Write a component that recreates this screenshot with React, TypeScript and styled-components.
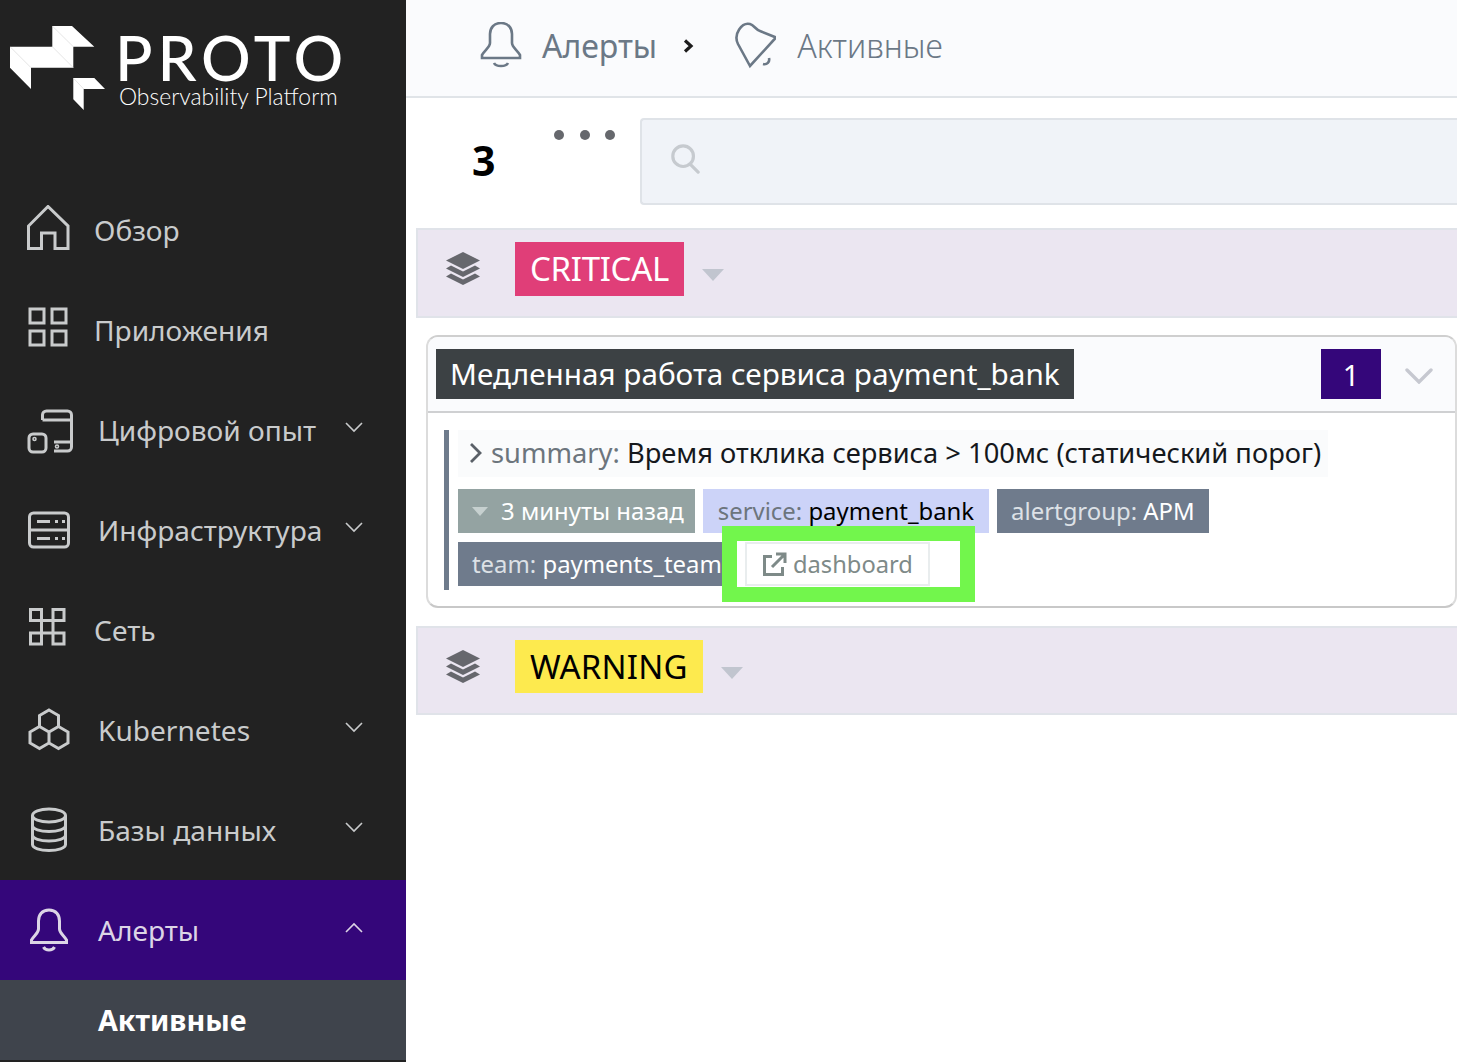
import React from "react";
import styled, { createGlobalStyle } from "styled-components";

const Global = createGlobalStyle`
  html, body { margin: 0; padding: 0; background: #fff; }
  body { font-family: "Noto Sans", "Open Sans", sans-serif; overflow: hidden; }
  #root { width: 1457px; height: 1062px; }
  * { box-sizing: border-box; }
`;

const Page = styled.div`
  display: flex; width: 1457px; height: 1062px; overflow: hidden; background: #fff;
`;
const Sidebar = styled.aside`
  width: 406px; flex: none; background: #222222; display: flex; flex-direction: column;
`;
const LogoArea = styled.div`
  height: 180px; display: flex; align-items: flex-start; padding: 26px 0 0 10px; color: #fff;
`;
const LogoMark = styled.svg`
  width: 95px; height: 84px; flex: none; fill: #fff;
`;
const LogoFold = styled.path`
  fill: none; stroke: #d4d4d4; stroke-width: 0.6;
`;
const LogoText = styled.div`
  margin-left: 10px; display: flex; flex-direction: column;
`;
const LogoTitle = styled.div`
  font-family: Lato, sans-serif; font-size: 62px; line-height: 46px; letter-spacing: 4.9px; font-weight: 500; margin-top: 8px; white-space: nowrap;
`;
const LogoSub = styled.div`
  font-family: Lato, sans-serif; font-weight: 300; font-size: 22.9px; line-height: 24px; margin: 4px 0 0 4px; white-space: nowrap;
`;
const NavItem = styled.div<{ $active?: boolean }>`
  height: 100px; display: flex; align-items: center; padding-left: 27px; padding-right: 43px;
  background: ${(p) => (p.$active ? "#34067a" : "transparent")};
  color: ${(p) => (p.$active ? "#dcd5e6" : "#c9cbcc")};
`;
const NavIcon = styled.svg<{ $wide?: boolean }>`
  width: ${(p) => (p.$wide ? 71 : 67)}px; height: 50px; flex: none;
  fill: none; stroke: currentColor; stroke-width: 3;
`;
const NavLabel = styled.span`
  font-size: 28.1px; line-height: 36px; flex: 1;
`;
const NavChevron = styled.svg`
  width: 18px; height: 11px; flex: none; fill: none; stroke: currentColor; stroke-width: 1.6; margin-top: -5px;
`;
const SubItem = styled.div`
  height: 80px; background: #3f444c; color: #fff; font-weight: 700; font-size: 28.7px; display: flex; align-items: center; padding: 0 0 2px 98px;
`;
const Main = styled.main`
  flex: 1; min-width: 0; display: flex; flex-direction: column;
`;
const Header = styled.header`
  height: 98px; background: #fafbfd; border-bottom: 2px solid #e0e4e8; display: flex; align-items: center;
  padding: 0 0 4px 74px; color: #6b7886;
`;
const CrumbIcon = styled.svg`
  width: 42px; height: 48px; flex: none; fill: none; stroke: currentColor; stroke-width: 2.6;
`;
const CrumbText = styled.span<{ $light?: boolean }>`
  font-size: ${(p) => (p.$light ? 32.1 : 32)}px; margin-left: ${(p) => (p.$light ? 21 : 20)}px; line-height: 40px;
  font-weight: ${(p) => (p.$light ? 300 : 400)};
`;
const CrumbSep = styled.svg`
  width: 11px; height: 14px; flex: none; margin: 0 40px 0 26px; fill: none; stroke: #1c1c1c; stroke-width: 3.2;
`;
const Toolbar = styled.div`
  display: flex; align-items: flex-start; padding: 20px 0 0 66px; height: 130px; flex: none;
`;
const Count = styled.div`
  width: 82px; font-size: 41px; font-weight: 700; color: #000; line-height: 48px; margin-top: 18px;
`;
const Dots = styled.div`
  display: flex; gap: 15.5px; margin-top: 12px; width: 86px; flex: none;
`;
const Dot = styled.span`
  width: 10px; height: 10px; border-radius: 50%; background: #66686d;
`;
const Search = styled.div`
  flex: 1; height: 87px; background: #f0f3f8; border: 2px solid #dfe3e8; border-right: none; border-radius: 4px 0 0 4px;
  display: flex; align-items: center; padding: 0 0 6px 28px;
`;
const SearchIcon = styled.svg`
  width: 30px; height: 30px; fill: none; stroke: #c6cacf; stroke-width: 3.4; stroke-linecap: round;
`;
const Group = styled.section<{ $warn?: boolean }>`
  margin-left: 10px; height: ${(p) => (p.$warn ? 89 : 90)}px; background: #ebe6f1; border: 2px solid #e0e3e9; border-right: none;
  display: flex; align-items: center; padding: 0 0 8px 27px;
`;
const LayersIcon = styled.svg`
  width: 36px; height: 36px; flex: none; fill: #66676d;
`;
const Severity = styled.div<{ $warn?: boolean }>`
  margin-left: 34px; height: ${(p) => (p.$warn ? 53 : 54)}px; padding: 0 15px ${(p) => (p.$warn ? 0 : 2)}px; display: flex; align-items: center;
  background: ${(p) => (p.$warn ? "#fdea4e" : "#e03e78")}; color: ${(p) => (p.$warn ? "#000" : "#fff")};
  font-size: 33px; letter-spacing: ${(p) => (p.$warn ? 0.2 : -0.3)}px;
`;
const Caret = styled.svg`
  width: 22px; height: 14px; flex: none; margin: 12px 0 0 18px; fill: #c1c5cf;
`;
const Card = styled.article`
  margin: 17px 0 18px 20px; height: 273px; border: 2px solid #dcdcdc; border-top-color: #cfcfcf; border-bottom-color: #c8c8c8; border-radius: 12px;
  background: #fff; overflow: hidden;
`;
const CardHead = styled.div`
  height: 76px; background: #fafbfd; border-bottom: 2px solid #cfd0d2; display: flex; align-items: center; padding: 0 22px 0 8px;
`;
const Title = styled.div`
  height: 50px; padding: 0 14px 2px 14px; background: #3c4144; color: #fff; font-size: 29.7px; display: flex; align-items: center;
`;
const CountBadge = styled.div`
  margin-left: auto; width: 60px; height: 50px; background: #34067a; color: #fff; font-size: 29px; display: flex; align-items: center; justify-content: center;
`;
const HeadChevron = styled.svg`
  width: 28px; height: 16px; margin: 3px 0 0 24px; flex: none; fill: none; stroke: #c6c8d0; stroke-width: 3.4; stroke-linecap: round;
`;
const CardBody = styled.div`
  margin: 17px 0 0 16px; border-left: 5px solid #6f7b8c; height: 160px; padding-left: 9px;
`;
const Summary = styled.div`
  display: inline-flex; align-items: center; height: 47px; background: #fafbfc; padding: 0 7px 2px 11px; font-size: 27.3px; color: #15181c;
  white-space: nowrap; vertical-align: top;
`;
const SumChevron = styled.svg`
  width: 14px; height: 22px; flex: none; margin-right: 8px; fill: none; stroke: #5a6068; stroke-width: 2.8;
`;
const Muted = styled.span`
  color: #6c757d;
`;
const KeyLight = styled.span`
  color: #dde1e6;
`;
const Tags = styled.div`
  display: flex; gap: 8px; margin-top: 12px; height: 44px;
`;
const Tag = styled.div<{ $bg: string; $fg: string }>`
  height: 44px; display: flex; align-items: center; padding: 0 14px 2px;
  background: ${(p) => p.$bg}; color: ${(p) => p.$fg};
  font-size: 23.9px; white-space: nowrap;
`;
const TimeTag = styled(Tag)`
  padding: 0 11px 2px 14px;
`;
const ServiceTag = styled(Tag)`
  padding: 0 15px 2px;
`;
const TimeCaret = styled.svg`
  width: 16px; height: 9px; margin: 2px 13px 0 0; fill: #c6d0cf;
`;
const TagRow2 = styled.div`
  display: flex; margin-top: 9px; height: 44px;
`;
const TeamTag = styled(Tag)`
  padding: 0 0 2px 14px; width: 280px;
`;
const LinkSlot = styled.div`
  position: relative; width: 202px; height: 44px;
`;
const Highlight = styled.div`
  position: absolute; left: -16px; right: -35px; top: -16px; height: 76px; border: 15px solid #72f64c; background: #fff;
`;
const LinkBtn = styled.div`
  position: absolute; left: 7px; top: 0; width: 185px; height: 44px; border: 2px solid #e9edee; background: #fff; color: #7e8a88;
  display: flex; align-items: center; padding: 0 0 0 15px; font-size: 23.7px;
`;
const LinkIcon = styled.svg`
  width: 25px; height: 25px; margin-right: 6px; flex: none; fill: none; stroke: #7e8a88; stroke-width: 3;
`;

const Chev = ({ up }: { up?: boolean }) => (
  <NavChevron viewBox="0 0 18 11"><path d={up ? "M1 10L9 2l8 8" : "M1 1l8 8 8-8"} /></NavChevron>
);
const Layers = () => (
  <LayersIcon viewBox="0 0 36 36">
    <path d="M18 1L35 9.5 18 18 1 9.5z" />
    <path d="M6 14.5l12 6 12-6 5 3-17 8.5L1 17.5z" />
    <path d="M6 22.5l12 6 12-6 5 3L18 34 1 25.5z" />
  </LayersIcon>
);
const BellPath = "M21 3c-7 0-11 5-11 11v9c0 4-5 7-8 12v3h38v-3c-3-5-8-8-8-12v-9c0-6-4-11-11-11z";

export default function App() {
  return (
    <Page>
      <Global />
      <Sidebar>
        <LogoArea>
          <LogoMark viewBox="0 0 95 84">
            <path d="M42.3 0H62L84.3 20.7H63.3V41.7H21V63L0 41.7V20.7H42.3z" />
            <path d="M63.3 52H84.3L95 63H73.7V84L63.3 73.3z" />
            <LogoFold d="M42.300 0L63.300 20.700M42.300 20.700L63.300 41.700M0 20.700L21 41.700M63.300 52L73.700 63" />
          </LogoMark>
          <LogoText>
            <LogoTitle>PROTO</LogoTitle>
            <LogoSub>Observability Platform</LogoSub>
          </LogoText>
        </LogoArea>
        <NavItem>
          <NavIcon viewBox="0 0 67 50"><path d="M1.5 43.500V21L21 1.500 41 21v22.500H28V28H14.500v15.500z" /></NavIcon>
          <NavLabel>Обзор</NavLabel>
        </NavItem>
        <NavItem>
          <NavIcon viewBox="0 0 67 50">
            <rect x="3" y="4" width="14" height="14" /><rect x="25" y="4" width="14" height="14" />
            <rect x="3" y="26" width="14" height="14" /><rect x="25" y="26" width="14" height="14" />
          </NavIcon>
          <NavLabel>Приложения</NavLabel>
        </NavItem>
        <NavItem>
          <NavIcon $wide viewBox="0 0 71 50">
            <path d="M15.500 15V10a4 4 0 0 1 4-4h21a4 4 0 0 1 4 4v32a4 4 0 0 1-4 4H27M15.500 15h29M27 37h17.500" />
            <rect x="2" y="29" width="17" height="18" rx="4" />
            <circle cx="7.500" cy="34" r="0.8" /><circle cx="30" cy="41.500" r="0.8" />
          </NavIcon>
          <NavLabel>Цифровой опыт</NavLabel>
          <Chev />
        </NavItem>
        <NavItem>
          <NavIcon $wide viewBox="0 0 71 50">
            <rect x="2.500" y="8" width="39" height="34" rx="4" />
            <path d="M2.500 25h39M10 16.500h13M10 33.500h13M28 16.500h3M35 16.500h3M28 33.500h3M35 33.500h3" />
          </NavIcon>
          <NavLabel>Инфраструктура</NavLabel>
          <Chev />
        </NavItem>
        <NavItem>
          <NavIcon viewBox="0 0 67 50">
            <path d="M3.500 4.500h11v11h-11zM26 4.500h11v11H26zM3.500 28h11v11h-11zM26 28h11v11H26zM14.500 15.500H26M14.500 28H26M14.500 15.500V28M26 15.500V28M3.500 15.500h11M26 15.500h11" />
          </NavIcon>
          <NavLabel>Сеть</NavLabel>
        </NavItem>
        <NavItem>
          <NavIcon $wide viewBox="0 0 71 50">
            <path d="M22 5l9.500 5.500v11L22 27l-9.500-5.500v-11zM12.500 21.500L22 27v11l-9.500 5.500L3 38V27zM31.500 21.500L41 27v11l-9.500 5.500L22 38V27z" />
          </NavIcon>
          <NavLabel>Kubernetes</NavLabel>
          <Chev />
        </NavItem>
        <NavItem>
          <NavIcon $wide viewBox="0 0 71 50">
            <ellipse cx="22" cy="10.500" rx="16.500" ry="6.500" />
            <path d="M5.500 10.500v29c0 3.500 7.500 6 16.500 6s16.500-2.500 16.500-6v-29M5.500 20.500c0 3.500 7.500 6 16.500 6s16.500-2.500 16.500-6M5.500 30c0 3.500 7.500 6 16.500 6s16.500-2.500 16.500-6" />
          </NavIcon>
          <NavLabel>Базы данных</NavLabel>
          <Chev />
        </NavItem>
        <NavItem $active>
          <NavIcon $wide viewBox="0 0 71 50">
            <path d="M22 5c-7 0-10.500 5-10.500 11v8c0 4-4 6-7 11v2.500h35V35c-3-5-7-7-7-11v-8C32.500 10 29 5 22 5zM16.500 42c2 4 9 4 11 0" />
          </NavIcon>
          <NavLabel>Алерты</NavLabel>
          <Chev up />
        </NavItem>
        <SubItem>Активные</SubItem>
      </Sidebar>
      <Main>
        <Header>
          <CrumbIcon viewBox="0 2 42 48"><path d={BellPath} /><path d="M14 43c2 4 12 4 14 0" /></CrumbIcon>
          <CrumbText>Алерты</CrumbText>
          <CrumbSep viewBox="0 0 11 14"><path d="M2 1.500l6 5.500-6 5.500" /></CrumbSep>
          <CrumbIcon viewBox="0 0 42 48">
            <path d="M16 44L4 22C-1 12 8 0 16 2C20 3 22 8 26 9L42 15.500ZM29 42c4 1 7-2 6-6" />
          </CrumbIcon>
          <CrumbText $light>Активные</CrumbText>
        </Header>
        <Toolbar>
          <Count>3</Count>
          <Dots><Dot /><Dot /><Dot /></Dots>
          <Search>
            <SearchIcon viewBox="0 0 32 32"><circle cx="14" cy="13" r="11" /><path d="M22 22l8 8" /></SearchIcon>
          </Search>
        </Toolbar>
        <Group>
          <Layers />
          <Severity>CRITICAL</Severity>
          <Caret viewBox="0 0 22 14"><path d="M0 1h22L11 13z" /></Caret>
        </Group>
        <Card>
          <CardHead>
            <Title>Медленная работа сервиса payment_bank</Title>
            <CountBadge>1</CountBadge>
            <HeadChevron viewBox="0 0 28 16"><path d="M2 2l12 12L26 2" /></HeadChevron>
          </CardHead>
          <CardBody>
            <Summary>
              <SumChevron viewBox="0 0 14 22"><path d="M2 2l9 9-9 9" /></SumChevron>
              <span><Muted>summary:</Muted> Время отклика сервиса &gt; 100мс (статический порог)</span>
            </Summary>
            <Tags>
              <TimeTag $bg="#94a3a2" $fg="#fff">
                <TimeCaret viewBox="0 0 16 9"><path d="M0 0h16L8 9z" /></TimeCaret>
                3 минуты назад
              </TimeTag>
              <ServiceTag $bg="#ccd3f8" $fg="#000"><span><Muted>service:</Muted> payment_bank</span></ServiceTag>
              <Tag $bg="#6f7b8c" $fg="#fff"><span><KeyLight>alertgroup:</KeyLight> APM</span></Tag>
            </Tags>
            <TagRow2>
              <TeamTag $bg="#6f7b8c" $fg="#fff"><span><KeyLight>team:</KeyLight> payments_team</span></TeamTag>
              <LinkSlot>
                <Highlight />
                <LinkBtn>
                  <LinkIcon viewBox="0 0 25 25"><path d="M10 4.500H2.500v18h18V15M14 2h9v9M23 2L10 15" /></LinkIcon>
                  dashboard
                </LinkBtn>
              </LinkSlot>
            </TagRow2>
          </CardBody>
        </Card>
        <Group $warn>
          <Layers />
          <Severity $warn>WARNING</Severity>
          <Caret viewBox="0 0 22 14"><path d="M0 1h22L11 13z" /></Caret>
        </Group>
      </Main>
    </Page>
  );
}
